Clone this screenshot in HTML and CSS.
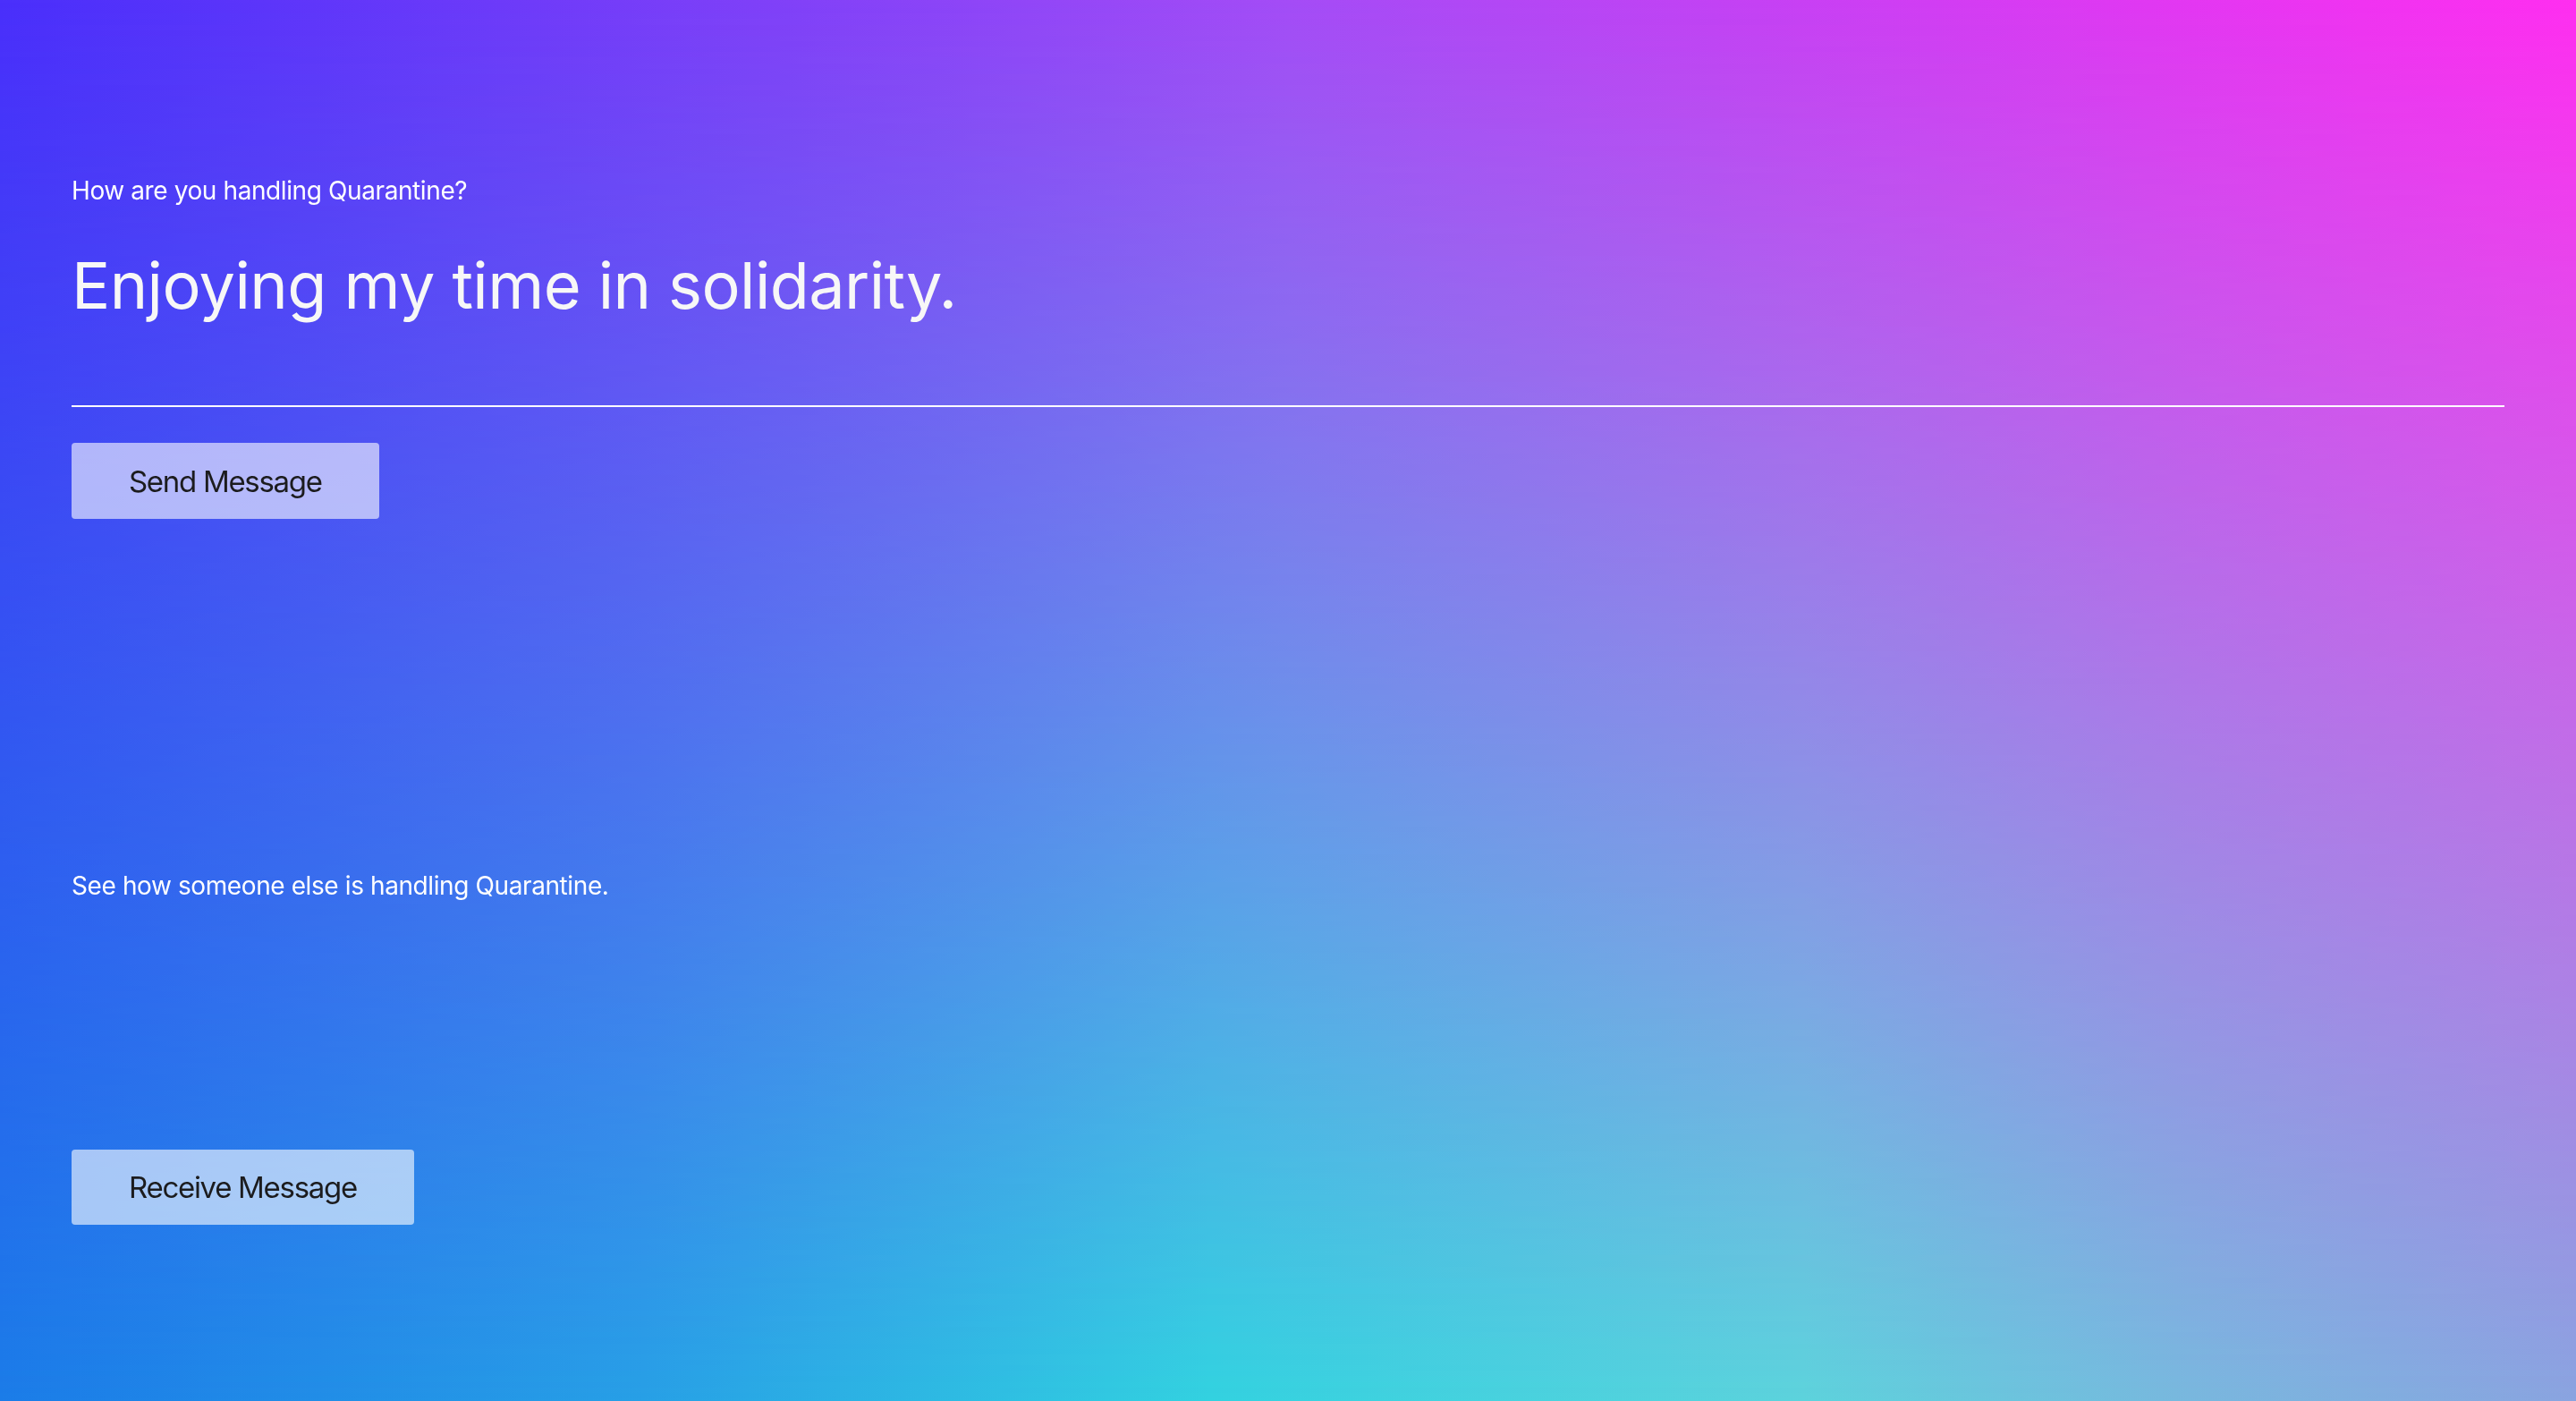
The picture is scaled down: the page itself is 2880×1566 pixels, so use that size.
FILE: index.html
```html
<!DOCTYPE html>
<html lang="en">
<head>
<meta charset="utf-8">
<title>Quarantine</title>
<link rel="stylesheet" href="styles.css">
</head>
<body>
<main class="page">
  <section class="send">
    <label class="prompt" for="msg">How are you handling Quarantine?</label>
    <input id="msg" class="msg-input" type="text" value="Enjoying my time in solidarity.">
    <button class="btn btn-send">Send Message</button>
  </section>
  <section class="receive">
    <p class="prompt">See how someone else is handling Quarantine.</p>
    <div class="received"></div>
    <button class="btn btn-receive">Receive Message</button>
  </section>
</main>
</body>
</html>
```
FILE: styles.css
```css
html, body {
  margin: 0;
  padding: 0;
  height: 100%;
}
html {
  background: linear-gradient(to right, #4a2ffb 0%, #a44cf6 50%, #ff2ef0 100%);
}
body {
  font-family: Inter, "Noto Sans", "Liberation Sans", sans-serif;
  color: #fff;
  overflow: hidden;
  position: relative;
}
body::before {
  content: "";
  position: fixed;
  inset: 0;
  z-index: -1;
  background: linear-gradient(to right, #1b7ce8 0%, #27a0e6 25%, #32d2e0 47%, #5cd3dc 70%, #78b8de 85%, #8aa4e0 100%);
  -webkit-mask-image: linear-gradient(to bottom, rgba(0,0,0,0) 0%, rgba(0,0,0,1) 100%);
  mask-image: linear-gradient(to bottom, rgba(0,0,0,0) 0%, rgba(0,0,0,1) 100%);
}
.page {
  display: flex;
  flex-direction: column;
  padding: 0 80px;
}
.send {
  display: flex;
  flex-direction: column;
  align-items: flex-start;
  padding-top: 196px;
}
.prompt {
  margin: 0;
  font-size: 28px;
  line-height: 34px;
  letter-spacing: -0.4px;
  color: #fff;
}
.msg-input {
  margin-top: 45px;
  width: 100%;
  box-sizing: content-box;
  height: 87px;
  padding: 0 0 91px 0;
  font-family: inherit;
  font-size: 72px;
  line-height: 87px;
  letter-spacing: -0.6px;
  color: #f7f7f7;
  background: transparent;
  border: none;
  border-bottom: 2px solid #fff;
  outline: none;
}
.btn {
  font-family: inherit;
  font-size: 33px;
  letter-spacing: -1.3px;
  color: #1c1c1e;
  background: rgba(255,255,255,0.6);
  border: none;
  border-radius: 4px;
  height: 85px;
  padding: 0 64px;
}
.btn-send {
  margin-top: 40px;
}
.receive {
  display: flex;
  flex-direction: column;
  align-items: flex-start;
  padding-top: 393px;
}
.received {
  height: 278px;
}
.btn-receive {
  height: 84px;
}
```
